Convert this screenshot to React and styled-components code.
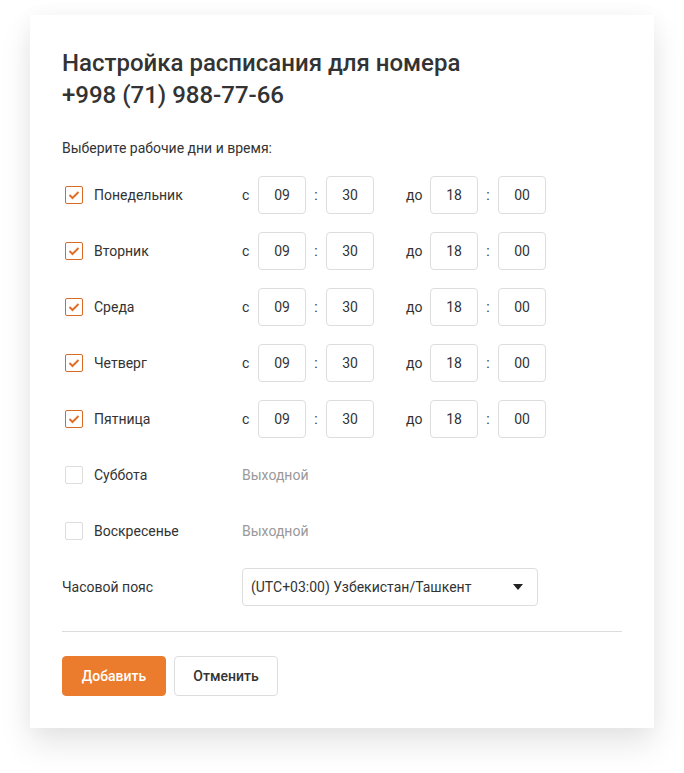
import React, { useState } from 'react';
import styled, { createGlobalStyle } from 'styled-components';

const Global = createGlobalStyle`
  body {
    margin: 0;
    background: #fff;
    font-family: Roboto, "Liberation Sans", Arial, sans-serif;
    color: #333;
  }
`;

const ORANGE = '#ec7c2d';

const Page = styled.div`
  padding: 15px 30px 45px;
  min-height: 773px;
  box-sizing: border-box;
`;

const Card = styled.div`
  width: 624px;
  box-sizing: border-box;
  padding: 32px;
  background: #fff;
  box-shadow: 0 16px 30px rgba(0, 0, 0, 0.1), 0 0 20px rgba(0, 0, 0, 0.03);
`;

const Title = styled.h1`
  margin: 0;
  font-size: 24px;
  line-height: 32px;
  font-weight: 500;
  color: #333;
`;

const Subtitle = styled.p`
  margin: 28px 0 10px;
  font-size: 14px;
  line-height: 18px;
`;

const Row = styled.div`
  display: flex;
  align-items: center;
  height: 56px;
  font-size: 14px;
`;

const DayCell = styled.label`
  display: flex;
  align-items: center;
  gap: 11px;
  width: 180px;
  padding-left: 3px;
  box-sizing: border-box;
  cursor: pointer;
`;

const Box = styled.span`
  width: 18px;
  height: 18px;
  box-sizing: border-box;
  border: 1px solid ${p => (p.$on ? '#d96a26' : '#ddd')};
  border-radius: 2px;
  display: flex;
  align-items: center;
  justify-content: center;
`;

const Word = styled.span`
  width: ${p => p.$w}px;
  flex: none;
`;

const Field = styled.div`
  width: 48px;
  height: 38px;
  box-sizing: border-box;
  border: 1px solid #ddd;
  border-radius: 4px;
  display: flex;
  align-items: center;
  justify-content: center;
`;

const Colon = styled.span`
  width: 20px;
  text-align: center;
`;

const Gap = styled.span`
  width: ${p => p.$w}px;
`;

const Off = styled.span`
  color: #999;
`;

const Select = styled.div`
  width: 296px;
  height: 38px;
  box-sizing: border-box;
  border: 1px solid #ddd;
  border-radius: 4px;
  padding: 0 14px 0 8px;
  display: flex;
  align-items: center;
  justify-content: space-between;
`;

const Arrow = styled.span`
  width: 0;
  height: 0;
  border-left: 5px solid transparent;
  border-right: 5px solid transparent;
  border-top: 6px solid #222;
`;

const Divider = styled.hr`
  margin: 16px 0 24px;
  border: 0;
  border-top: 1px solid #ddd;
`;

const Actions = styled.div`
  display: flex;
  gap: 8px;
`;

const Button = styled.button`
  width: 104px;
  height: 40px;
  border-radius: 4px;
  font-family: inherit;
  font-size: 14px;
  font-weight: 500;
  cursor: pointer;
  border: 1px solid ${p => (p.$primary ? ORANGE : '#ddd')};
  background: ${p => (p.$primary ? ORANGE : '#fff')};
  color: ${p => (p.$primary ? '#fff' : '#333')};
`;

const Check = () => (
  <svg width="12" height="10" viewBox="0 0 12 10">
    <path d="M1.5 5 L4.5 8 L10.5 2" fill="none" stroke="#e0702a" strokeWidth="2" />
  </svg>
);

const days = [
  ['Понедельник', true],
  ['Вторник', true],
  ['Среда', true],
  ['Четверг', true],
  ['Пятница', true],
  ['Суббота', false],
  ['Воскресенье', false],
];

export default function App() {
  const [on, setOn] = useState(days.map(d => d[1]));
  const toggle = i => setOn(on.map((v, j) => (j === i ? !v : v)));

  return (
    <Page>
      <Global />
      <Card>
        <Title>
          Настройка расписания для номера
          <br />
          +998 (71) 988-77-66
        </Title>
        <Subtitle>Выберите рабочие дни и время:</Subtitle>
        {days.map(([name], i) => (
          <Row key={name}>
            <DayCell onClick={() => toggle(i)}>
              <Box $on={on[i]}>{on[i] && <Check />}</Box>
              {name}
            </DayCell>
            {on[i] ? (
              <>
                <Word $w={16}>с</Word>
                <Field>09</Field>
                <Colon>:</Colon>
                <Field>30</Field>
                <Gap $w={32} />
                <Word $w={24}>до</Word>
                <Field>18</Field>
                <Colon>:</Colon>
                <Field>00</Field>
              </>
            ) : (
              <Off>Выходной</Off>
            )}
          </Row>
        ))}
        <Row>
          <Word $w={180}>Часовой пояс</Word>
          <Select>
            (UTC+03:00) Узбекистан/Ташкент
            <Arrow />
          </Select>
        </Row>
        <Divider />
        <Actions>
          <Button $primary>Добавить</Button>
          <Button>Отменить</Button>
        </Actions>
      </Card>
    </Page>
  );
}
